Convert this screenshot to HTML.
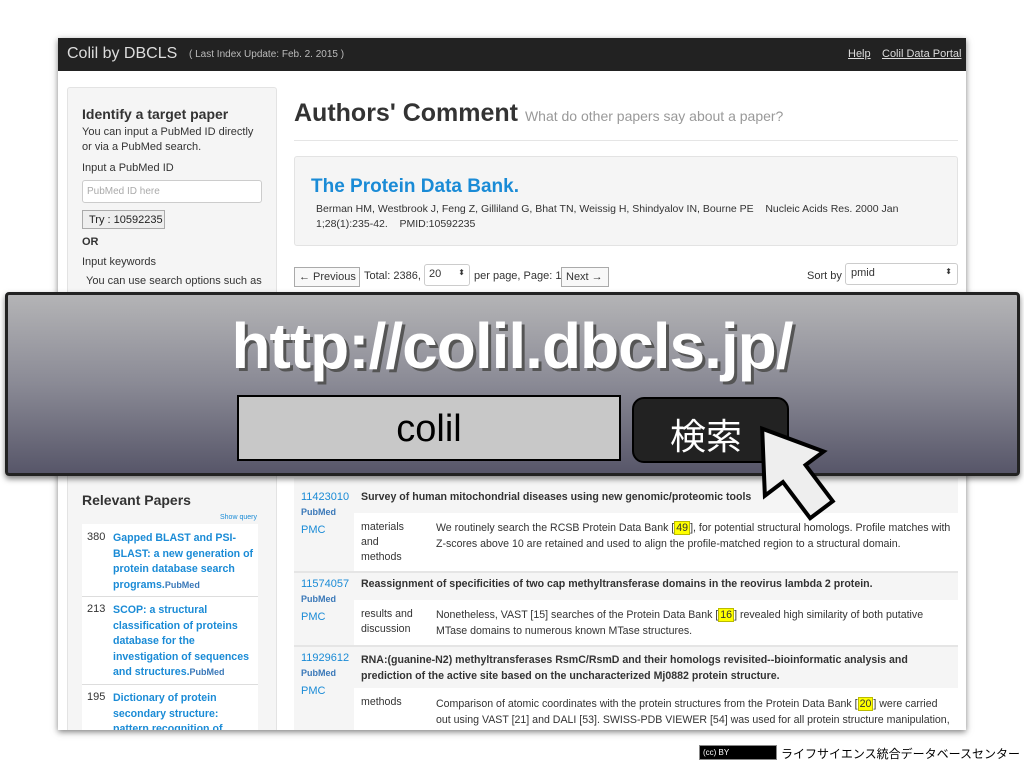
<!DOCTYPE html>
<html><head><meta charset="utf-8"><style>
*{margin:0;padding:0;box-sizing:border-box}
body{width:1024px;height:768px;background:#fff;position:relative;overflow:hidden;font-family:"Liberation Sans",Arial,sans-serif;color:#333}
.a{position:absolute;white-space:nowrap}
.page{position:absolute;left:58px;top:38px;width:908px;height:692px;background:#fff;overflow:hidden;box-shadow:0 2px 6px rgba(0,0,0,.5)}
.nav{position:absolute;left:0;top:0;width:908px;height:33px;background:#222}
.side{position:absolute;left:9px;top:49px;width:210px;height:700px;background:#f5f5f5;border:1px solid #e3e3e3;border-radius:3px}
.f11{font-size:11px}
.r{font-size:10.6px}
.blue{color:#1a8bd6}
.pm{font-size:9px;font-weight:bold;color:#3a78b8}
.hl{background:#ff0;border:1px solid #bb0;padding:0 1px}
</style></head><body>
<div class="page">
 <div class="nav">
  <div class="a" style="left:9px;top:7px;font-size:16px;color:#ddd">Colil by DBCLS</div>
  <div class="a" style="left:131px;top:11px;font-size:10px;color:#bbb">( Last Index Update: Feb. 2. 2015 )</div>
  <div class="a" style="left:790px;top:10px;font-size:11px;color:#ddd;text-decoration:underline">Help</div>
  <div class="a" style="left:824px;top:10px;font-size:11px;color:#ddd;text-decoration:underline">Colil Data Portal</div>
 </div>
 <div class="side"></div>
 <div class="a" style="left:24px;top:68px;font-size:14px;font-weight:bold;color:#333">Identify a target paper</div>
 <div class="a f11" style="left:24px;top:87px;line-height:15px">You can input a PubMed ID directly<br>or via a PubMed search.</div>
 <div class="a f11" style="left:24px;top:124px">Input a PubMed ID</div>
 <div class="a" style="left:24px;top:142px;width:180px;height:23px;background:#fff;border:1px solid #ccc;border-radius:3px;font-size:10px;color:#aaa;padding:5px 4px">PubMed ID here</div>
 <div class="a f11" style="left:24px;top:172px;width:83px;height:19px;background:#eee;border:1px solid #aaa;padding:3px 6px;color:#222">Try : 10592235</div>
 <div class="a f11" style="left:24px;top:198px;font-weight:bold">OR</div>
 <div class="a f11" style="left:24px;top:218px">Input keywords</div>
 <div class="a f11" style="left:28px;top:237px">You can use search options such as</div>
 <div class="a" style="left:24px;top:454px;font-size:14px;font-weight:bold">Relevant Papers</div>
 <div class="a blue" style="left:162px;top:476px;font-size:7px">Show query</div>
 <div class="a" style="left:24px;top:486px;width:176px;height:206px;background:#fff"></div>
 <div class="a f11" style="left:29px;top:493px">380</div>
 <div class="a blue r" style="left:55px;top:493px;font-weight:bold;line-height:15.5px">Gapped BLAST and PSI-<br>BLAST: a new generation of<br>protein database search<br>programs.<span class="pm">PubMed</span></div>
 <div class="a" style="left:24px;top:558px;width:176px;border-top:1px solid #ddd"></div>
 <div class="a f11" style="left:29px;top:565px">213</div>
 <div class="a blue r" style="left:55px;top:565px;font-weight:bold;line-height:15.5px">SCOP: a structural<br>classification of proteins<br>database for the<br>investigation of sequences<br>and structures.<span class="pm">PubMed</span></div>
 <div class="a" style="left:24px;top:646px;width:176px;border-top:1px solid #ddd"></div>
 <div class="a f11" style="left:29px;top:653px">195</div>
 <div class="a blue r" style="left:55px;top:653px;font-weight:bold;line-height:15.5px">Dictionary of protein<br>secondary structure:<br>pattern recognition of</div>

 <div class="a" style="left:236px;top:61px;font-size:25px;font-weight:bold;color:#333">Authors' Comment <span style="font-size:14px;font-weight:normal;color:#999">What do other papers say about a paper?</span></div>
 <div class="a" style="left:236px;top:102px;width:664px;border-top:1px solid #e5e5e5"></div>
 <div class="a" style="left:236px;top:118px;width:664px;height:90px;background:#f5f5f5;border:1px solid #e3e3e3;border-radius:3px"></div>
 <div class="a blue" style="left:253px;top:138px;font-size:19px;font-weight:bold">The Protein Data Bank.</div>
 <div class="a" style="left:258px;top:164px;font-size:10.5px;line-height:15px">Berman HM, Westbrook J, Feng Z, Gilliland G, Bhat TN, Weissig H, Shindyalov IN, Bourne PE &nbsp;&nbsp; Nucleic Acids Res. 2000 Jan<br>1;28(1):235-42. &nbsp;&nbsp; PMID:10592235</div>
 <div class="a f11" style="left:236px;top:229px;width:66px;height:20px;border:1px solid #aaa;background:#f8f8f8;padding:3px 4px">← Previous</div>
 <div class="a f11" style="left:306px;top:232px">Total: 2386,</div>
 <div class="a f11" style="left:366px;top:226px;width:46px;height:22px;border:1px solid #ccc;border-radius:3px;padding:3px 4px;background:#fff">20 <span style="float:right;font-size:8px">⬍</span></div>
 <div class="a f11" style="left:416px;top:232px">per page, Page: 1</div>
 <div class="a f11" style="left:503px;top:229px;width:48px;height:20px;border:1px solid #aaa;background:#f8f8f8;padding:3px 4px">Next →</div>
 <div class="a f11" style="left:749px;top:232px">Sort by</div>
 <div class="a f11" style="left:787px;top:225px;width:113px;height:22px;border:1px solid #ccc;border-radius:3px;padding:3px 5px;background:#fff">pmid<span style="float:right;font-size:8px">⬍</span></div>

 <div class="a" style="left:236px;top:440px;width:664px;height:260px;background:#f5f5f5"></div>
 <div class="a" style="left:296px;top:475px;width:604px;height:58px;background:#fff"></div>
 <div class="a" style="left:296px;top:562px;width:604px;height:45px;background:#fff"></div>
 <div class="a" style="left:296px;top:650px;width:604px;height:50px;background:#fff"></div>
 <div class="a" style="left:236px;top:533px;width:664px;border-top:2px solid #e5e5e5"></div>
 <div class="a" style="left:236px;top:607px;width:664px;border-top:2px solid #e5e5e5"></div>

 <div class="a blue f11" style="left:243px;top:453px">11423010</div>
 <div class="a pm" style="left:243px;top:469px">PubMed</div>
 <div class="a blue f11" style="left:243px;top:486px">PMC</div>
 <div class="a r" style="left:303px;top:453px;font-weight:bold">Survey of human mitochondrial diseases using new genomic/proteomic tools</div>
 <div class="a r" style="left:303px;top:482px;line-height:15px">materials<br>and<br>methods</div>
 <div class="a r" style="left:378px;top:482px;line-height:16px">We routinely search the RCSB Protein Data Bank [<span class="hl">49</span>], for potential structural homologs. Profile matches with<br>Z-scores above 10 are retained and used to align the profile-matched region to a structural domain.</div>

 <div class="a blue f11" style="left:243px;top:540px">11574057</div>
 <div class="a pm" style="left:243px;top:556px">PubMed</div>
 <div class="a blue f11" style="left:243px;top:573px">PMC</div>
 <div class="a r" style="left:303px;top:540px;font-weight:bold">Reassignment of specificities of two cap methyltransferase domains in the reovirus lambda 2 protein.</div>
 <div class="a r" style="left:303px;top:569px;line-height:15px">results and<br>discussion</div>
 <div class="a r" style="left:378px;top:569px;line-height:16px">Nonetheless, VAST [15] searches of the Protein Data Bank [<span class="hl">16</span>] revealed high similarity of both putative<br>MTase domains to numerous known MTase structures.</div>

 <div class="a blue f11" style="left:243px;top:614px">11929612</div>
 <div class="a pm" style="left:243px;top:630px">PubMed</div>
 <div class="a blue f11" style="left:243px;top:647px">PMC</div>
 <div class="a r" style="left:303px;top:614px;font-weight:bold;line-height:16px">RNA:(guanine-N2) methyltransferases RsmC/RsmD and their homologs revisited--bioinformatic analysis and<br>prediction of the active site based on the uncharacterized Mj0882 protein structure.</div>
 <div class="a r" style="left:303px;top:658px">methods</div>
 <div class="a r" style="left:378px;top:658px;line-height:16px">Comparison of atomic coordinates with the protein structures from the Protein Data Bank [<span class="hl">20</span>] were carried<br>out using VAST [21] and DALI [53]. SWISS-PDB VIEWER [54] was used for all protein structure manipulation,</div>
</div>

<!-- banner -->
<div class="a" style="left:5px;top:292px;width:1015px;height:184px;border:3px solid #222;border-radius:4px;background:linear-gradient(#b4b4b6,#8a8a95 50%,#575669);box-shadow:0 3px 6px rgba(0,0,0,.5)"></div>
<div class="a" style="left:0;width:1024px;text-align:center;top:309px;font-size:64px;font-weight:bold;color:#fff;text-shadow:3px 3px 0 #555;letter-spacing:-1px">http://colil.dbcls.jp/</div>
<div class="a" style="left:237px;top:395px;width:384px;height:66px;background:#c8c8c8;border:2px solid #000;font-size:38px;color:#000;text-align:center;padding-top:11px">colil</div>
<div class="a" style="left:632px;top:397px;width:157px;height:66px;background:#222;border:2px solid #000;border-radius:12px;font-family:'Noto Sans CJK JP',sans-serif;font-size:36px;color:#fff;padding:9px 0 0 36px">検索</div>
<svg class="a" style="left:740px;top:425px" width="110" height="100" viewBox="0 0 110 100">
<path d="M16 8 L80 22 L64 38 L96 70 L76 90 L44 58 L28 74 Z" fill="#eee" stroke="#000" stroke-width="4" stroke-linejoin="miter" transform="rotate(8 50 50)"/>
</svg>

<div class="a" style="left:699px;top:745px;width:78px;height:15px;background:#000;border:1px solid #888;color:#fff;font-size:8px;padding:2px 3px">(cc) BY</div>
<div class="a" style="left:781px;top:745px;font-family:'Liberation Sans','Noto Sans CJK JP',sans-serif;font-size:12px;color:#000">ライフサイエンス統合データベースセンター</div>
</body></html>
